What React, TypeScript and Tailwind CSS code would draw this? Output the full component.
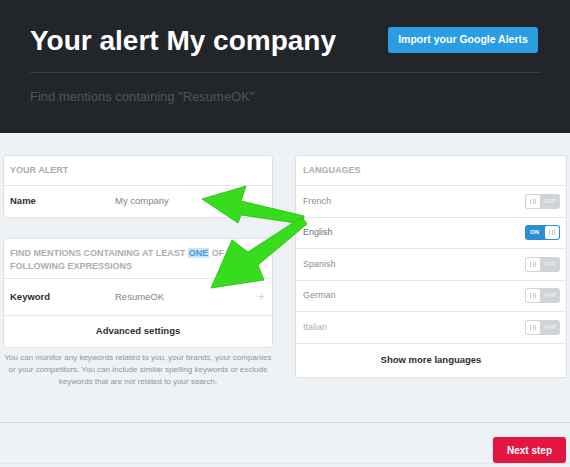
import React from "react";

const languages = [
    { name: "French", on: false, color: "text-[#8a8f94]" },
    { name: "English", on: true, color: "text-[#6b7177]" },
    { name: "Spanish", on: false, color: "text-[#8a8f94]" },
    { name: "German", on: false, color: "text-[#8a8f94]" },
    { name: "Italian", on: false, color: "text-[#a9aeb3]" },
];

function Knob() {
    return (
        <span className="flex h-[13px] w-[14px] items-center justify-center gap-[1.5px] rounded-[2px] bg-white">
            <span className="h-[5px] w-px bg-[#c4c9ce]" />
            <span className="h-[5px] w-px bg-[#c4c9ce]" />
            <span className="h-[5px] w-px bg-[#c4c9ce]" />
        </span>
    );
}

function Toggle({ on }: { on: boolean }) {
    if (on) {
        return (
            <div className="flex h-[15px] w-[35px] items-center justify-between rounded-[3px] bg-[#2b8fd6] pl-[5px] pr-px">
                <span className="text-[6px] font-semibold text-white">ON</span>
                <Knob />
            </div>
        );
    }
    return (
        <div className="flex h-[15px] w-[35px] items-center justify-between rounded-[3px] bg-[#cfd4d9] pl-px pr-[4px]">
            <Knob />
            <span className="text-[6px] text-[#f3f5f7]">OFF</span>
        </div>
    );
}

// the two green annotation arrows drawn over the page
function Arrows() {
    return (
        <svg
            className="pointer-events-none absolute left-0 top-0"
            width="570"
            height="467"
            viewBox="0 0 570 467"
        >
            <g fill="#37dc1c" stroke="#2bb514" strokeWidth="0.8" strokeLinejoin="round">
                <polygon points="202,199 246,186 241,201 304,216 303,224 241,215 238,223" />
                <polygon points="211,288 232,240 248,252 302,217 307,224 258,265 264,280" />
            </g>
        </svg>
    );
}

export default function App() {
    return (
        <div className="relative h-[467px] w-[570px] overflow-hidden bg-[#eef2f5] font-['Liberation_Sans',Arial,sans-serif]">
            {/* header */}
            <div className="h-[133px] bg-[#22262b] px-[30px] pt-[27px]">
                <div className="flex items-start justify-between pr-[2px]">
                    <h1 className="text-[28px] font-bold leading-[28px] text-white">
                        Your alert My company
                    </h1>
                    <button className="h-[26px] w-[150px] rounded-[3px] bg-[#2b9de3] text-[10.5px] font-bold text-white">
                        Import your Google Alerts
                    </button>
                </div>
                <div className="mt-[17px] border-t border-[#3a3f45]" />
                <p className="mt-[16px] text-[13px] leading-[16px] text-[#4f545a]">
                    Find mentions containing "ResumeOK"
                </p>
            </div>

            {/* body */}
            <div className="flex h-[289px] gap-[22px] px-[3px] pt-[22px]">
                <div className="w-[270px]">
                    <div className="rounded-[3px] border border-[#dde2e6] bg-white">
                        <div className="flex h-[30px] items-center border-b border-[#e5e8eb] pl-[6px] text-[9px] font-semibold text-[#a9aeb3]">
                            YOUR ALERT
                        </div>
                        <div className="flex h-[31px] items-center pl-[6px] text-[9.5px]">
                            <span className="w-[105px] font-bold text-[#2b2f33]">Name</span>
                            <span className="text-[#80868b]">My company</span>
                        </div>
                    </div>

                    <div className="mt-[20px] rounded-[3px] border border-[#dde2e6] bg-white">
                        <div className="h-[40px] border-b border-[#e5e8eb] pl-[6px] pt-[8px] text-[9px] font-semibold leading-[13px] text-[#a9aeb3]">
                            FIND MENTIONS CONTAINING AT LEAST{" "}
                            <span className="bg-[#cfe5f7] px-px text-[#3e9be0]">ONE</span> OF THE
                            <br />
                            FOLLOWING EXPRESSIONS
                        </div>
                        <div className="flex h-[37px] items-center border-b border-[#e5e8eb] pl-[6px] pr-[7px] text-[9.5px]">
                            <span className="w-[105px] font-bold text-[#2b2f33]">Keyword</span>
                            <span className="flex-1 text-[#80868b]">ResumeOK</span>
                            <span className="text-[12px] text-[#cdd1d5]">+</span>
                        </div>
                        <div className="flex h-[31px] items-center justify-center text-[9.5px] font-bold text-[#2b2f33]">
                            Advanced settings
                        </div>
                    </div>

                    <p className="mt-[4px] whitespace-nowrap text-center text-[8px] leading-[12px] text-[#8f959a]">
                        You can monitor any keywords related to you, your brands, your companies
                        <br />
                        or your competitors. You can include similar spelling keywords or exclude
                        <br />
                        keywords that are not related to your search.
                    </p>
                </div>

                <div className="w-[272px]">
                    <div className="rounded-[3px] border border-[#dde2e6] bg-white">
                        <div className="flex h-[30px] items-center border-b border-[#e5e8eb] pl-[7px] text-[9px] font-semibold text-[#a9aeb3]">
                            LANGUAGES
                        </div>
                        {languages.map((lang) => (
                            <div
                                key={lang.name}
                                className="flex h-[31.5px] items-center justify-between border-b border-[#e5e8eb] pl-[7px] pr-[6px]"
                            >
                                <span className={`text-[9px] ${lang.color}`}>{lang.name}</span>
                                <Toggle on={lang.on} />
                            </div>
                        ))}
                        <div className="flex h-[33px] items-center justify-center text-[9.5px] font-bold text-[#2b2f33]">
                            Show more languages
                        </div>
                    </div>
                </div>
            </div>

            {/* footer */}
            <div className="border-t border-[#d3d8dc] shadow-[0_1px_1px_#e3e7eb]">
                <div className="flex justify-end pr-[4px] pt-[14px]">
                    <button className="h-[26px] w-[73px] rounded-[3px] bg-[#e2163f] text-[10px] font-bold text-white">
                        Next step
                    </button>
                </div>
            </div>

            <Arrows />
        </div>
    );
}
